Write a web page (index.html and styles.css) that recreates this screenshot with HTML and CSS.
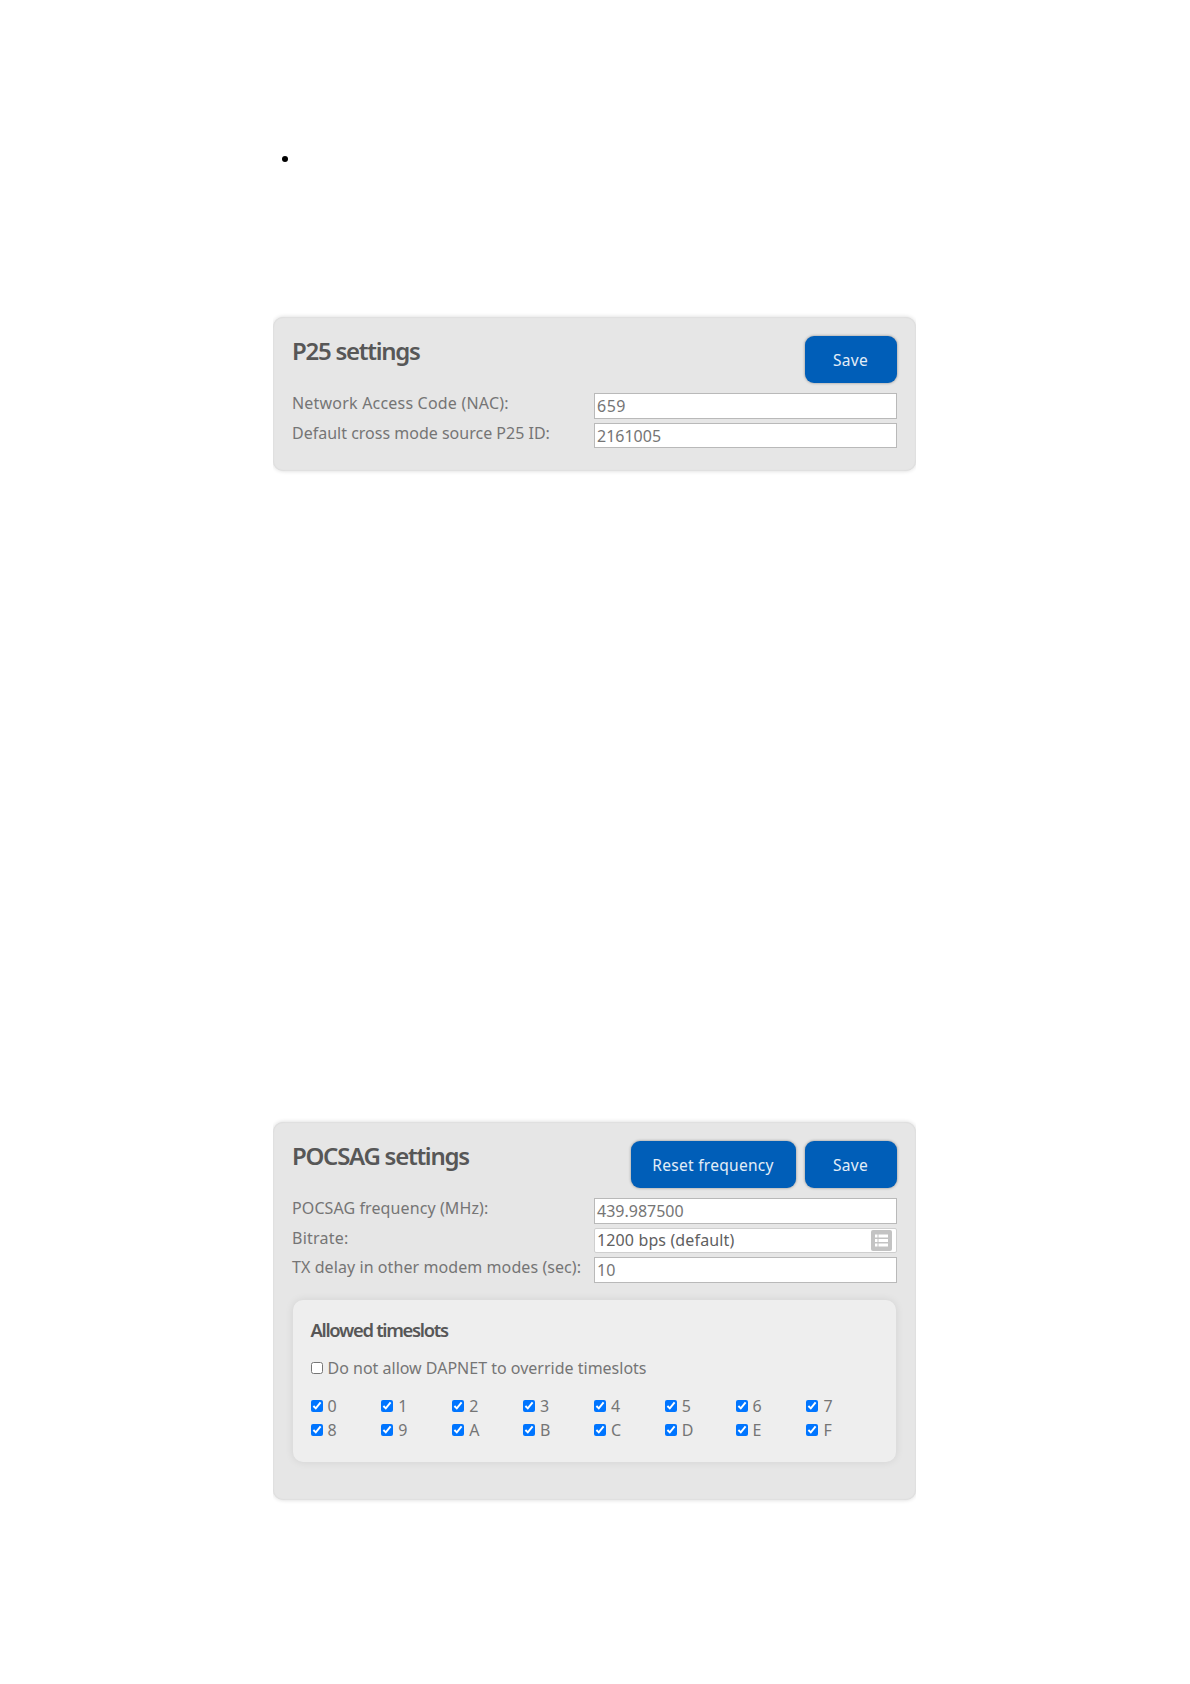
FILE: index.html
```html
<!DOCTYPE html>
<html lang="en">
<head>
<meta charset="utf-8">
<title>Modem settings</title>
<link rel="stylesheet" href="styles.css">
</head>
<body>
<main class="page">
  <ul class="notes"><li></li></ul>

  <section class="panel panel-p25">
    <header class="panel-head">
      <h2 class="title">P25 settings</h2>
      <div class="actions"><button class="btn">Save</button></div>
    </header>
    <div class="fields">
      <div class="row"><span class="label label-nac">Network Access Code (NAC):</span><div class="field field-nac">659</div></div>
      <div class="row"><span class="label">Default cross mode source P25 ID:</span><div class="field">2161005</div></div>
    </div>
  </section>

  <section class="panel panel-pocsag">
    <header class="panel-head">
      <h2 class="title">POCSAG settings</h2>
      <div class="actions"><button class="btn btn-wide">Reset frequency</button><button class="btn">Save</button></div>
    </header>
    <div class="fields">
      <div class="row"><span class="label label-freq">POCSAG frequency (MHz):</span><div class="field">439.987500</div></div>
      <div class="row"><span class="label label-bitrate">Bitrate:</span>
        <div class="field field-select"><span>1200 bps (default)</span>
          <svg class="list-icon" viewBox="0 0 21 21"><rect width="21" height="21" rx="2" fill="#c3c3c3"/><path d="M4 4.5h2.5v3H4zM7.5 4.5h9.5v3H7.5zM4 9h2.5v3H4zM7.5 9h9.5v3H7.5zM4 13.5h2.5v3H4zM7.5 13.5h9.5v3H7.5z" fill="#fff"/></svg>
        </div></div>
      <div class="row"><span class="label label-delay">TX delay in other modem modes (sec):</span><div class="field">10</div></div>
    </div>
    <div class="slots">
      <h3 class="subtitle">Allowed timeslots</h3>
      <label class="check override"><input type="checkbox"><span>Do not allow DAPNET to override timeslots</span></label>
      <div class="grid">
        <label class="check"><input type="checkbox" checked>0</label>
        <label class="check"><input type="checkbox" checked>1</label>
        <label class="check"><input type="checkbox" checked>2</label>
        <label class="check"><input type="checkbox" checked>3</label>
        <label class="check"><input type="checkbox" checked>4</label>
        <label class="check"><input type="checkbox" checked>5</label>
        <label class="check"><input type="checkbox" checked>6</label>
        <label class="check"><input type="checkbox" checked>7</label>
        <label class="check"><input type="checkbox" checked>8</label>
        <label class="check"><input type="checkbox" checked>9</label>
        <label class="check"><input type="checkbox" checked>A</label>
        <label class="check"><input type="checkbox" checked>B</label>
        <label class="check"><input type="checkbox" checked>C</label>
        <label class="check"><input type="checkbox" checked>D</label>
        <label class="check"><input type="checkbox" checked>E</label>
        <label class="check"><input type="checkbox" checked>F</label>
      </div>
    </div>
  </section>
</main>
</body>
</html>
```
FILE: styles.css
```css
* { box-sizing: border-box; }
body {
  margin: 0;
  background: #fff;
  color: #757575;
  font: 16px/20px "Noto Sans", sans-serif;
}
.page {
  width: 643px;
  height: 1684px;
  margin-left: 273px;
  padding-top: 156px;
  overflow: hidden;
}
.notes { list-style: none; margin: 0; padding: 0 0 0 9px; height: 161px; }
.notes li::before {
  content: "";
  display: block;
  width: 6px;
  height: 6px;
  border-radius: 50%;
  background: #000;
}
.panel {
  padding: 19px 19px 0 19px;
  border-radius: 10px;
  background: #e6e6e6;
  box-shadow: inset 0 0 2px rgba(0,0,0,.1), 0 0 4px rgba(0,0,0,.16);
}
.panel-p25 { height: 154px; margin-bottom: 651px; }
.panel-pocsag { height: 378px; }
.panel-head { display: flex; justify-content: space-between; height: 57px; }
.title {
  margin: 0;
  color: #575757;
  font-size: 24px;
  font-weight: 600;
  line-height: 30px;
  letter-spacing: -1.27px;
  white-space: nowrap;
}
.actions { display: flex; gap: 9px; }
.btn {
  width: 92px;
  height: 47px;
  padding: 1px 1px 0 0;
  border: 0;
  border-radius: 9px;
  background: #005eb8;
  color: #e3edf7;
  font: 15.5px/20px "Noto Sans", sans-serif;
  letter-spacing: .3px;
  white-space: nowrap;
  box-shadow: 0 0 3px rgba(0,0,0,.4);
}
.btn-wide { width: 165px; }
.fields { display: flex; flex-direction: column; gap: 4px; }
.row { display: grid; grid-template-columns: 302px 302.5px; height: 25.5px; }
.label { white-space: nowrap; }
.label-nac { letter-spacing: .2px; }
.label-freq { letter-spacing: .1px; }
.label-bitrate { letter-spacing: .25px; }
.label-delay { letter-spacing: .08px; }
.field {
  height: 25.5px;
  padding-left: 2px;
  border: 1px solid #b9b9b9;
  background: #fff;
  line-height: 24px;
}
.field-nac { letter-spacing: .5px; }
.field-select {
  display: flex;
  align-items: center;
  justify-content: space-between;
  padding-right: 4px;
  border-color: #cfcfcf;
  border-radius: 2px;
  color: #606060;
  letter-spacing: .13px;
}
.list-icon { width: 21px; height: 21px; }
.slots {
  height: 162px;
  margin: 17px 0 0 1px;
  width: 603px;
  padding: 17px 18px 0 17.5px;
  border-radius: 10px;
  background: #eee;
  box-shadow: 0 0 8px rgba(0,0,0,.09);
}
.subtitle {
  margin: 0 0 18.5px;
  color: #575757;
  font-size: 18.4px;
  font-weight: 600;
  line-height: 25px;
  letter-spacing: -1.3px;
}
.check { display: flex; align-items: center; white-space: nowrap; }
.check input { width: 12px; height: 12px; margin: 0 5px 0 0; }
.override { height: 16px; margin-bottom: 18px; }
.grid { display: grid; grid-template-columns: repeat(8, 70.85px); grid-auto-rows: 24px; }
```
